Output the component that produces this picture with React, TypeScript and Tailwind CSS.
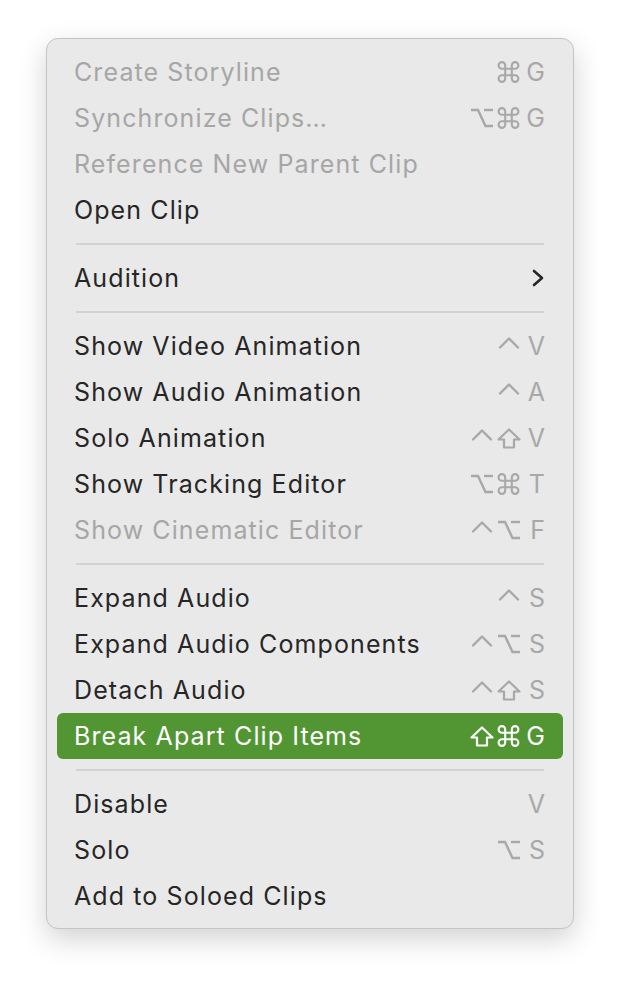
import { ReactNode } from "react";

type Mod = "ctrl" | "opt" | "shift" | "cmd";

type Item = {
  label: string;
  mods?: Mod[];
  keyChar?: string;
  disabled?: boolean;
  submenu?: boolean;
  active?: boolean;
};

const groups: Item[][] = [
  [
    { label: "Create Storyline", mods: ["cmd"], keyChar: "G", disabled: true },
    { label: "Synchronize Clips…", mods: ["opt", "cmd"], keyChar: "G", disabled: true },
    { label: "Reference New Parent Clip", disabled: true },
    { label: "Open Clip" },
  ],
  [{ label: "Audition", submenu: true }],
  [
    { label: "Show Video Animation", mods: ["ctrl"], keyChar: "V" },
    { label: "Show Audio Animation", mods: ["ctrl"], keyChar: "A" },
    { label: "Solo Animation", mods: ["ctrl", "shift"], keyChar: "V" },
    { label: "Show Tracking Editor", mods: ["opt", "cmd"], keyChar: "T" },
    { label: "Show Cinematic Editor", mods: ["ctrl", "opt"], keyChar: "F", disabled: true },
  ],
  [
    { label: "Expand Audio", mods: ["ctrl"], keyChar: "S" },
    { label: "Expand Audio Components", mods: ["ctrl", "opt"], keyChar: "S" },
    { label: "Detach Audio", mods: ["ctrl", "shift"], keyChar: "S" },
    { label: "Break Apart Clip Items", mods: ["shift", "cmd"], keyChar: "G", active: true },
  ],
  [
    { label: "Disable", keyChar: "V" },
    { label: "Solo", mods: ["opt"], keyChar: "S" },
    { label: "Add to Soloed Clips" },
  ],
];

function ModIcon({ mod }: { mod: Mod }) {
  const common = {
    fill: "none",
    stroke: "currentColor",
    strokeWidth: 2.4,
    strokeLinecap: "round" as const,
    strokeLinejoin: "round" as const,
  };
  if (mod === "ctrl") {
    return (
      <svg width="22" height="20" viewBox="0 0 22 20" {...common}>
        <polyline points="2,11.5 11,2.5 20,11.5" />
      </svg>
    );
  }
  if (mod === "opt") {
    return (
      <svg width="24" height="20" viewBox="0 0 24 20" {...common} strokeLinecap="butt" strokeLinejoin="miter">
        <polyline points="1,2 8,2 15.5,18 23,18" />
        <line x1="14" y1="2" x2="23" y2="2" />
      </svg>
    );
  }
  if (mod === "shift") {
    return (
      <svg width="24" height="21" viewBox="0 0 24 21" {...common} strokeWidth={2.2}>
        <polygon points="12,1.5 22.5,11.5 17,11.5 17,19.5 7,19.5 7,11.5 1.5,11.5" />
      </svg>
    );
  }
  return (
    <svg width="23" height="22" viewBox="2 2 20 20" {...common} strokeWidth={1.9}>
      <path d="M15 6v12a3 3 0 1 0 3-3H6a3 3 0 1 0 3 3V6a3 3 0 1 0-3 3h12a3 3 0 1 0-3-3" />
    </svg>
  );
}

function Shortcut({ mods = [], keyChar }: { mods?: Mod[]; keyChar?: string }) {
  return (
    <div className="flex items-center">
      {mods.map((m) => (
        <span key={m} className="flex w-[27px] justify-center">
          <ModIcon mod={m} />
        </span>
      ))}
      <span className="flex w-[23px] justify-end tracking-normal">{keyChar}</span>
    </div>
  );
}

function Row({ item }: { item: Item }) {
  let text = "text-[#262626]";
  let keyColor = "text-[#a8a8a8]";
  if (item.disabled) text = "text-[#a6a6a6]";
  if (item.active) {
    text = "text-white";
    keyColor = "text-white";
  }
  let right: ReactNode = null;
  if (item.submenu) {
    right = (
      <svg width="14" height="20" viewBox="0 0 14 20" className="text-[#262626]">
        <polyline
          points="3,3 11,10 3,17"
          fill="none"
          stroke="currentColor"
          strokeWidth="2.6"
          strokeLinecap="round"
          strokeLinejoin="round"
        />
      </svg>
    );
  } else if (item.keyChar) {
    right = (
      <div className={keyColor}>
        <Shortcut mods={item.mods} keyChar={item.keyChar} />
      </div>
    );
  }
  return (
    <div
      className={`mx-[10px] flex h-[46px] items-center justify-between rounded-[6px] pl-[17px] pr-[18px] ${
        item.active ? "bg-[#529634]" : ""
      }`}
    >
      <span className={`${text} tracking-[1.1px]`}>{item.label}</span>
      {right}
    </div>
  );
}

export default function App() {
  return (
    <div className="flex min-h-[982px] justify-center bg-white pt-[38px] font-['Inter',sans-serif] text-[25px] leading-none">
      <div className="h-fit w-[528px] rounded-[12px] border border-[#c4c4c4] bg-[#e9e9e9] pt-[10px] pb-[9px] shadow-[0_10px_28px_rgba(0,0,0,0.18)]">
        {groups.map((group, gi) => (
          <div key={gi}>
            {gi > 0 && (
              <div className="flex h-[22px] items-center px-[29px]">
                <div className="h-[2px] w-full bg-[#d2d2d2]" />
              </div>
            )}
            {group.map((item) => (
              <Row key={item.label} item={item} />
            ))}
          </div>
        ))}
      </div>
    </div>
  );
}
